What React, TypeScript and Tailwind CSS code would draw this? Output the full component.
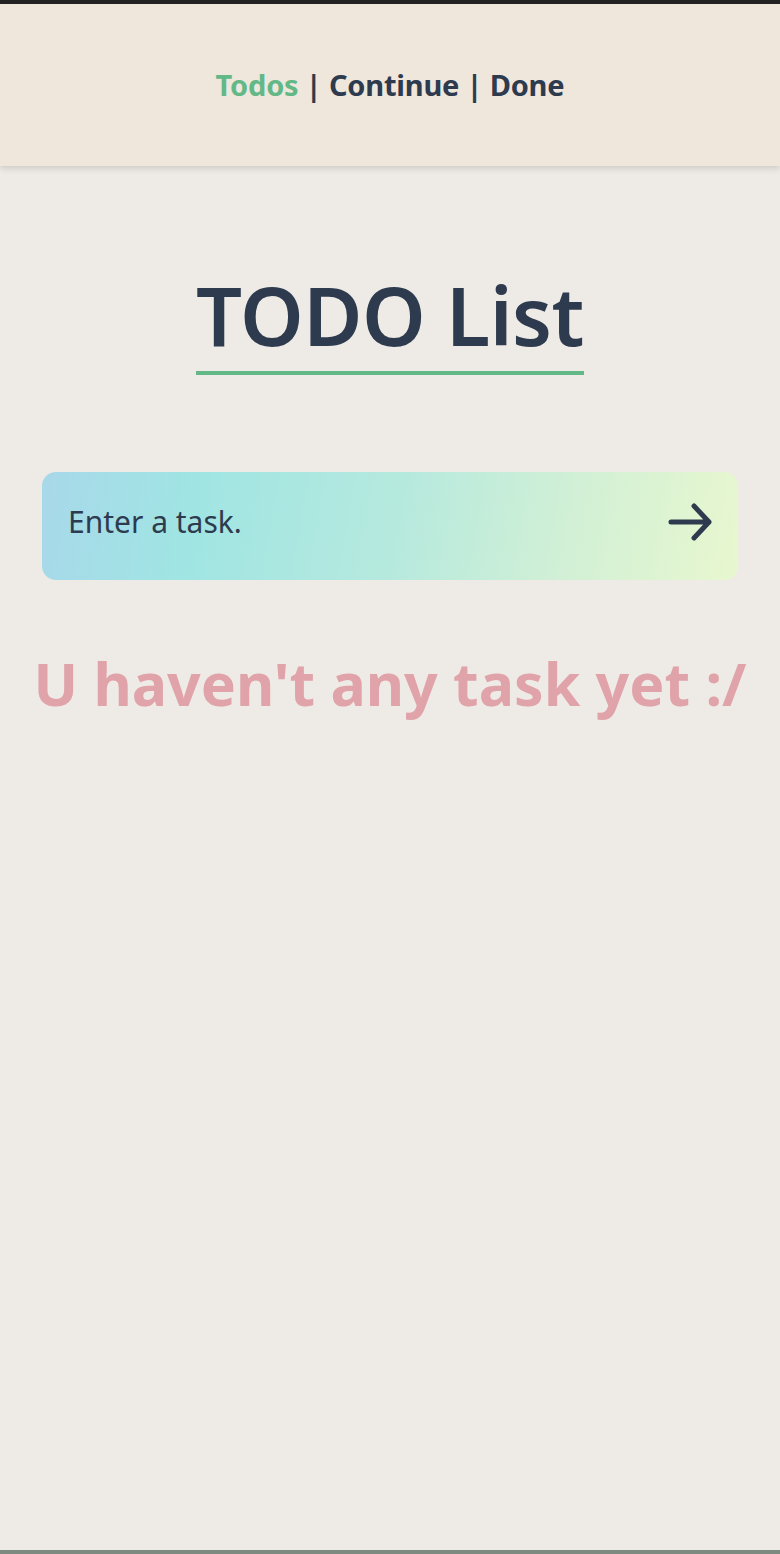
import { useState } from "react";

const font = { fontFamily: '"Noto Sans", "Open Sans", sans-serif' };

const Header = () => {
  return (
    <header className="h-[162px] bg-[#efe6dc] shadow-[0_3px_6px_rgba(0,0,0,0.12)] flex items-center justify-center relative z-10">
      <nav className="text-[29px] font-bold text-[#2e3b4e] tracking-[-0.2px]">
        <a className="text-[#63b887]">Todos</a>
        <span> | </span>
        <a>Continue</a>
        <span> | </span>
        <a>Done</a>
      </nav>
    </header>
  );
};

const App = () => {
  const [task, setTask] = useState("");

  return (
    <div
      style={font}
      className="min-h-[1554px] flex flex-col bg-[#eeebe6] border-t-4 border-t-[#232323] border-b-4 border-b-[#7e8a80]"
    >
      <Header />
      <main className="flex-1 flex flex-col items-center">
        <h1 className="mt-[101px] text-[81px] leading-[96px] font-semibold text-[#2e3b4e] border-b-4 border-[#63b887] pb-[8px] tracking-[-0.5px]">
          TODO List
        </h1>

        <form
          onSubmit={(e) => e.preventDefault()}
          className="mt-[97px] w-[696px] h-[108px] rounded-[14px] flex items-center pl-[26px] pr-[24px] pb-[9px] bg-[linear-gradient(100deg,#a8d8ea_0%,#a0e5e3_22%,#b5e9de_50%,#d2f0d5_76%,#e8f7cf_100%)]"
        >
          <input
            value={task}
            onChange={(e) => setTask(e.target.value)}
            placeholder="Enter a task."
            className="flex-1 bg-transparent outline-none text-[30px] text-[#2e3b4e] placeholder:text-[#2e3b4e]"
          />
          <button type="submit" className="text-[#2e3b4e]" aria-label="Add task">
            <svg width="46" height="40" viewBox="0 0 46 40" fill="none">
              <path
                d="M3 20 H41 M26 4 L41 20 L26 36"
                stroke="currentColor"
                strokeWidth="5"
                strokeLinecap="round"
                strokeLinejoin="round"
              />
            </svg>
          </button>
        </form>

        <p className="mt-[65px] text-[59px] leading-[76px] font-bold text-[#e0a3aa] text-center">
          U haven't any task yet :/
        </p>
      </main>
    </div>
  );
};

export default App;
